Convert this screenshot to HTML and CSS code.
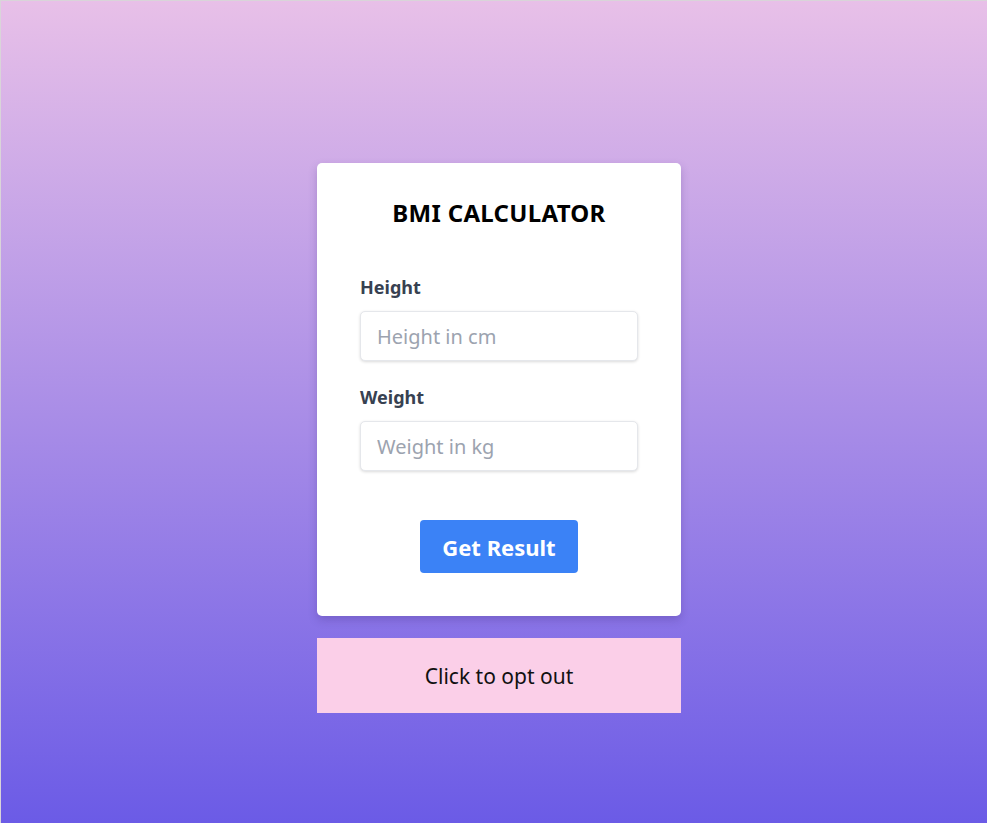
FILE: index.html
```html
<!DOCTYPE html>
<html lang="en">
<head>
<meta charset="utf-8">
<title>BMI Calculator</title>
<link rel="stylesheet" href="styles.css">
</head>
<body>
<main class="page">
  <section class="card">
    <h1 class="title">BMI CALCULATOR</h1>
    <form class="form">
      <label class="label" for="height">Height</label>
      <input class="input" id="height" type="text" placeholder="Height in cm">
      <label class="label label-second" for="weight">Weight</label>
      <input class="input" id="weight" type="text" placeholder="Weight in kg">
      <div class="actions">
        <button class="btn" type="button">Get Result</button>
      </div>
    </form>
  </section>
  <div class="optout">Click to opt out</div>
</main>
</body>
</html>
```
FILE: styles.css
```css
* { box-sizing: border-box; }
html, body { margin: 0; padding: 0; height: 100%; }
body {
  font-family: "Noto Sans", "Open Sans", sans-serif;
  border-top: 1px solid #d9d4d9;
  border-left: 1px solid #d9d4d9;
  background: linear-gradient(to bottom, #e8c0e8 0%, #6b5be6 100%);
  min-height: 823px;
}
.page {
  display: flex;
  flex-direction: column;
  align-items: center;
  padding-top: 162px;
  padding-left: 10px;
}
.card {
  width: 364px;
  background: #fff;
  border-radius: 5px;
  box-shadow: 0 4px 8px rgba(60, 40, 120, 0.25);
  padding: 34px 43px 43px;
}
.title {
  margin: 0;
  text-align: center;
  font-size: 24px;
  line-height: 32px;
  font-weight: 700;
  color: #000;
  letter-spacing: 0.3px;
}
.form { display: flex; flex-direction: column; margin-top: 44px; }
.label {
  font-size: 18px;
  line-height: 28px;
  font-weight: 700;
  color: #374151;
  margin-bottom: 10px;
}
.label-second { margin-top: 22px; }
.input {
  width: 100%;
  height: 50px;
  border: 1px solid #e5e7eb;
  border-radius: 5px;
  box-shadow: 0 1px 3px rgba(0,0,0,0.15);
  padding: 0 16px;
  font-family: inherit;
  font-size: 20px;
  color: #374151;
  outline: none;
}
.input::placeholder { color: #9ca3af; }
.actions { display: flex; justify-content: center; margin-top: 49px; }
.btn {
  width: 158px;
  height: 53px;
  border: none;
  border-radius: 4px;
  background: #3b82f6;
  color: #fff;
  font-family: inherit;
  font-size: 22px;
  font-weight: 700;
  cursor: pointer;
}
.optout {
  margin-top: 22px;
  width: 364px;
  height: 75px;
  background: #fbcfe8;
  display: flex;
  align-items: center;
  justify-content: center;
  font-size: 21px;
  color: #111;
}
```
